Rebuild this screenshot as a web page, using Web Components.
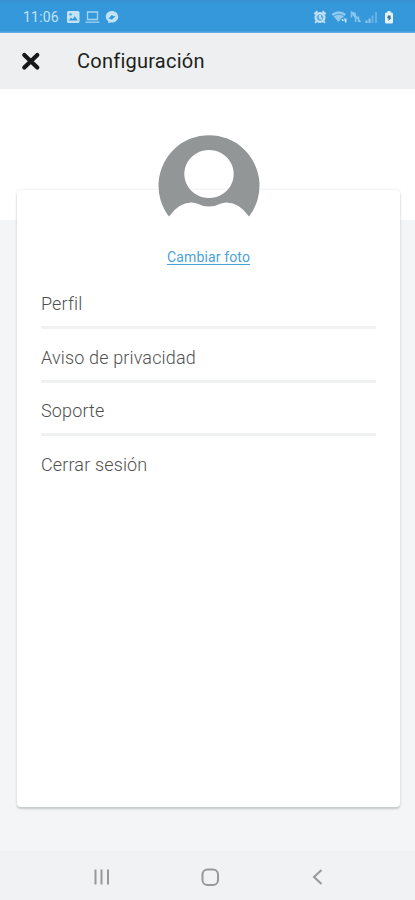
<!DOCTYPE html>
<html lang="es">
<head>
<meta charset="utf-8">
<title>Configuración</title>
<style>
html,body{margin:0;height:100%}
body{font-family:Roboto,"Liberation Sans",sans-serif;overflow:hidden}
</style>
</head>
<body>
<settings-screen>
  <status-bar slot="status" time="11:06"></status-bar>
  <app-header slot="header">Configuración</app-header>
  <settings-card>
    <user-avatar slot="avatar"></user-avatar>
    <text-link slot="avatar">Cambiar foto</text-link>
    <menu-row>Perfil</menu-row>
    <menu-row>Aviso de privacidad</menu-row>
    <menu-row>Soporte</menu-row>
    <menu-row last>Cerrar sesión</menu-row>
  </settings-card>
  <nav-bar slot="nav"></nav-bar>
</settings-screen>
<script>
const define = (name, html, setup) => customElements.define(name, class extends HTMLElement {
  constructor() {
    super();
    this.attachShadow({ mode: 'open' }).innerHTML = html;
    if (setup) setup(this);
  }
});

define('settings-screen', `<style>
:host{display:flex;flex-direction:column;width:415px;height:900px;background:#fff}
main{flex:1;box-sizing:border-box;padding:101px 15px 44px 17px;background:linear-gradient(#fff 131px,#f3f5f7 131px)}
</style><slot name="status"></slot><slot name="header"></slot><main><slot></slot></main><slot name="nav"></slot>`);

define('status-bar', `<style>
:host{display:flex;align-items:center;box-sizing:border-box;height:33px;padding:1px 19px 0 23px;background:linear-gradient(#368fd0,#3498db 4px,#3498db 31px,#72b6e5);color:#c2e3f7;font-size:14px}
span{width:44px;letter-spacing:.2px}
svg{display:block;fill:currentColor}
.right{margin-left:auto}
</style><span></span>
<svg width="53" height="16" viewBox="0 0 53 16">
<path fill-rule="evenodd" d="M1.500 2h9.500q1.500 0 1.500 1.500v9q0 1.500-1.500 1.500H1.500Q0 14 0 12.500v-9Q0 2 1.500 2zM1.800 11.500h9L7.800 7.300 5.500 10.200 4 8.500zM3.500 4.200a1.200 1.200 0 1 0 .01 0z"/>
<path fill="none" stroke="#a3d5f3" stroke-width="1.300" d="M20.500 3h10v7.500h-10zM18.500 13.200h14"/>
<path fill-rule="evenodd" d="M45 2c3.500 0 6.200 2.500 6.200 5.800 0 3.200-2.700 5.800-6.200 5.800l-1.700-.2-2 .9V12.200C39.800 11.100 38.800 9.700 38.800 7.800 38.800 4.500 41.500 2 45 2zM41.200 9.700l2.200.1 1.400 1 3.900-3.800-2.200.2-1.600-1.200z"/>
</svg>
<svg class="right" width="83" height="16" viewBox="0 0 83 16">
<path fill-rule="evenodd" d="M7 3a5.500 5.500 0 1 0 .01 0zM7 5.200a3.300 3.300 0 1 1-.01 0z"/>
<circle cx="7" cy="8.500" r="3.500" opacity=".3"/>
<path fill="none" stroke="currentColor" stroke-width="1.800" d="M1.200 5 4.500 2.200M9.500 2.200l3.300 2.800M3.500 12.300 2 13.800M10.500 12.300 12 13.800M7 6v3l2 1"/>
<path opacity=".65" d="M18.500 5q7.500-5.500 14.500 0l-3 3.500q-2 0-3 2.500l-1.500 2z"/>
<path fill="none" stroke="#3498db" stroke-width=".8" d="M20.500 7q5.500-3.500 10.500 0"/>
<path d="M28.500 10h1.500l1 2h-2zM31 9.500h2.500v4h-1.500z"/>
<path fill="none" stroke="currentColor" stroke-width="1.500" opacity=".6" d="M38.500 8.500V3.500l3.500 4.500V3.500M39.500 3l8 10M42.500 9v4M45.500 7.500v5.500"/>
<path opacity=".65" d="M52.500 11.500h2V14h-2zM55.500 9.500h2V14h-2z"/>
<path opacity=".35" d="M58.500 6.500h2V14h-2zM62 3h2v11h-2z"/>
<path fill="#e2f1fa" d="M74.500 2h3v1.500h1.200q1.300 0 1.300 1.500v8q0 1.500-1.300 1.500h-5.400Q72 14.500 72 13V5q0-1.500 1.300-1.500h1.200z"/>
<path fill="#3b6f96" d="M75 6.500h2.500v2.300h1L75.500 12V9.300h-1.300z"/>
</svg>`, el => { el.shadowRoot.querySelector('span').textContent = el.getAttribute('time') || '11:06'; });

define('app-header', `<style>
:host{display:flex;align-items:center;box-sizing:border-box;height:56px;padding:0 21px;gap:36px;background:#eeeff1;color:#1d1f20;font-size:20px;letter-spacing:.24px}
svg{display:block}
</style><svg width="20" height="20" viewBox="0 0 20 20"><path d="M3.300 4l13 12.500M16.300 4l-13 12.500" stroke="#151718" stroke-width="4.200" stroke-linecap="round"/></svg><span><slot></slot></span>`);

define('settings-card', `<style>
:host{display:flex;flex-direction:column;box-sizing:border-box;height:617px;padding:0 24px;background:#fff;border-radius:4px;box-shadow:0 2px 2px #c6caca,0 0 3px #dfe3e4}
.top{display:flex;flex-direction:column;align-items:center;margin-top:-55px;height:140.500px}
</style><div class="top"><slot name="avatar"></slot></div><slot></slot>`);

define('user-avatar', `<style>:host{display:block;height:112px}svg{display:block}</style>
<svg width="102" height="84" viewBox="0 0 102 84"><path fill="#939697" fill-rule="evenodd" d="M11 81.500A50.500 50.500 0 1 1 91 81.500Q81 67.500 69 67.500C61 67.500 60 71.500 51 71.500S41 67.500 33 67.500Q21 67.500 11 81.500zM51 15a24.700 24 0 1 0 .01 0z"/></svg>`);

define('text-link', `<style>:host{display:block;color:#4aa3d8;font-size:14px;letter-spacing:.14px;line-height:20px}a{text-decoration:underline;text-underline-offset:2px;text-decoration-thickness:1px}</style><a><slot></slot></a>`);

define('menu-row', `<style>
:host{display:flex;align-items:center;box-sizing:border-box;height:53.500px;padding-top:6px;border-bottom:3px solid #f0f1f1;color:#505050;font-size:18px;font-weight:300;letter-spacing:.15px}
:host([last]){border-bottom-color:transparent}
</style><slot></slot>`);

define('nav-bar', `<style>
:host{display:flex;align-items:center;box-sizing:border-box;height:49px;padding:2px 87px 0 91px;justify-content:space-between;background:#f1f2f3}
svg{display:block;fill:none;stroke:#979999;stroke-width:2}
</style>
<svg width="20" height="20" viewBox="0 0 20 20"><path d="M4.500 2.500v15M10.500 2.500v15M17 2.500v15"/></svg>
<svg width="20" height="20" viewBox="0 0 20 20"><rect x="2.500" y="2.500" width="15.500" height="15.500" rx="5"/></svg>
<svg width="20" height="20" viewBox="0 0 20 20"><path d="M13.500 3 6 10l7.500 7"/></svg>`);
</script>
</body>
</html>
